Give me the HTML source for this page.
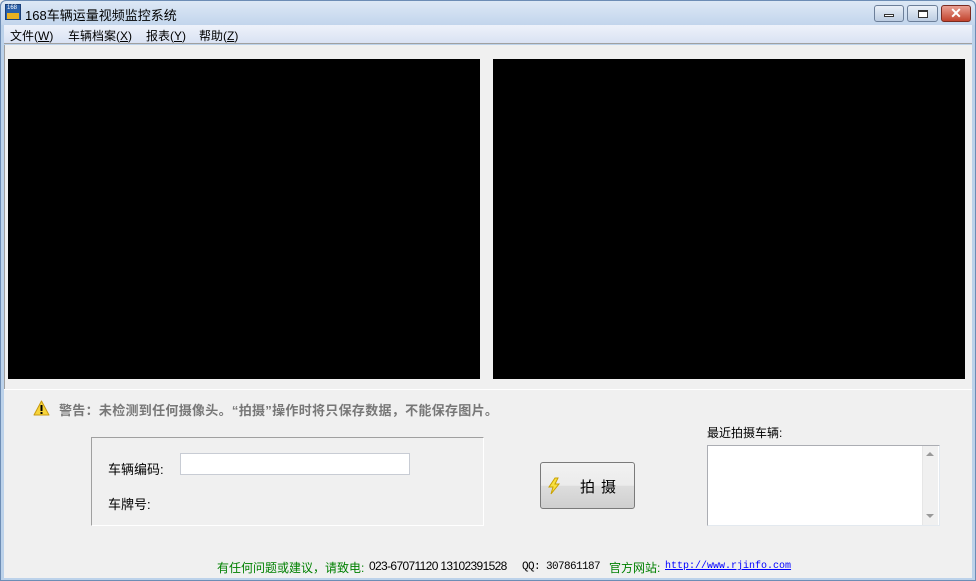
<!DOCTYPE html>
<html><head><meta charset="utf-8"><style>
*{margin:0;padding:0;box-sizing:border-box}
body{width:976px;height:581px;position:relative;overflow:hidden;background:#f0f0f0;font-family:"Liberation Sans","Noto Sans CJK SC",sans-serif;font-size:12px;color:#000}
.a{position:absolute;white-space:nowrap}
</style></head><body>
<div class="a" style="left:0;top:0;width:976px;height:581px;background:#bcd2ea;border:1px solid #6d8db5;border-radius:6px 6px 0 0"></div>
<div class="a" style="left:0;top:0;width:976px;height:25px;background:linear-gradient(#dde8f5,#c2d5ec);border-radius:6px 6px 0 0;border:1px solid #6d8db5;border-bottom:none"></div>
<div class="a" style="left:5px;top:4px;width:16px;height:16px;background:#2a5fa8;border:1px solid #1a3f78"><div class="a" style="left:1px;top:8px;width:12px;height:6px;background:#e8b020"></div><div class="a" style="left:1px;top:0;font-size:6px;color:#fff;line-height:7px">168</div></div>
<div class="a" style="left:25px;top:5px;font-size:13px;color:#000">168车辆运量视频监控系统</div>
<div class="a" style="left:874px;top:5px;width:30px;height:17px;border:1px solid #6c7f99;border-radius:3px;background:linear-gradient(#eaf0f8,#bccde2)"><div class="a" style="left:9px;top:8px;width:10px;height:3px;background:#fff;border:1px solid #333"></div></div>
<div class="a" style="left:907px;top:5px;width:31px;height:17px;border:1px solid #6c7f99;border-radius:3px;background:linear-gradient(#eaf0f8,#bccde2)"><div class="a" style="left:10px;top:4px;width:10px;height:8px;background:#fff;border:1px solid #333;border-top-width:2px"></div></div>
<div class="a" style="left:941px;top:5px;width:30px;height:17px;border:1px solid #7a2b20;border-radius:3px;background:linear-gradient(#e9a093,#c2432d);color:#fff;font-weight:bold;font-size:14px;line-height:14px;text-align:center">✕</div>
<div class="a" style="left:4px;top:25px;width:968px;height:19px;background:linear-gradient(#eef2fa,#d9e2f3);border-bottom:1px solid #a0a0a0"></div>
<div class="a" style="left:10px;top:27px;font-size:12px">文件(<u>W</u>)</div>
<div class="a" style="left:68px;top:27px;font-size:12px">车辆档案(<u>X</u>)</div>
<div class="a" style="left:146px;top:27px;font-size:12px">报表(<u>Y</u>)</div>
<div class="a" style="left:199px;top:27px;font-size:12px">帮助(<u>Z</u>)</div>
<div class="a" style="left:4px;top:45px;width:968px;height:533px;background:#f0f0f0"></div>
<div class="a" style="left:4px;top:45px;width:1px;height:344px;background:#a0a0a0"></div>
<div class="a" style="left:4px;top:389px;width:968px;height:1px;background:#fff"></div>
<div class="a" style="left:8px;top:59px;width:472px;height:320px;background:#000"></div>
<div class="a" style="left:493px;top:59px;width:472px;height:320px;background:#000"></div>
<svg class="a" style="left:33px;top:400px" width="17" height="16"><path d="M8.5 1 L16 15 H1 Z" fill="#f7d43a" stroke="#c89a10" stroke-linejoin="round"/><rect x="7.5" y="5" width="2" height="6" fill="#000"/><rect x="7.5" y="12" width="2" height="2" fill="#000"/></svg>
<div class="a" style="left:59px;top:400px;font-weight:bold;color:#777;font-size:13px;letter-spacing:0.3px">警告：未检测到任何摄像头。“拍摄”操作时将只保存数据，不能保存图片。</div>
<div class="a" style="left:91px;top:437px;width:393px;height:89px;border:1px solid #a0a0a0;border-right-color:#fff;border-bottom-color:#fff"></div>
<div class="a" style="left:108px;top:459px;font-size:13px">车辆编码:</div>
<div class="a" style="left:180px;top:453px;width:230px;height:22px;background:#fff;border:1px solid #c8ccd4"></div>
<div class="a" style="left:108px;top:494px;font-size:13px">车牌号:</div>
<div class="a" style="left:540px;top:462px;width:95px;height:47px;border:1px solid #7a7a7a;border-radius:3px;background:linear-gradient(#f2f2f2 0,#ebebeb 50%,#dddddd 51%,#cfcfcf 100%)"></div>
<svg class="a" style="left:547px;top:477px" width="14" height="18"><path d="M8 1 L2 10 H6 L4 17 L12 7 H8 L11 1 Z" fill="#f8e040" stroke="#c8a000"/></svg>
<div class="a" style="left:580px;top:476px;font-size:15px;letter-spacing:6px">拍摄</div>
<div class="a" style="left:707px;top:424px;font-size:12px">最近拍摄车辆:</div>
<div class="a" style="left:707px;top:445px;width:233px;height:81px;background:#fff;border:1px solid #abadb3;border-right-color:#e3e9ef;border-bottom-color:#e3e9ef"></div>
<div class="a" style="left:922px;top:446px;width:16px;height:79px;background:#f0f0f0;border-left:1px solid #e6e6e6"></div>
<div class="a" style="left:926px;top:452px;width:0;height:0;border:4px solid transparent;border-bottom:4px solid #999;border-top:none"></div>
<div class="a" style="left:926px;top:514px;width:0;height:0;border:4px solid transparent;border-top:4px solid #999;border-bottom:none"></div>
<div class="a" style="left:217px;top:559px;color:#008000">有任何问题或建议，请致电:</div>
<div class="a" style="left:369px;top:559px;letter-spacing:-0.65px">023-67071120 13102391528</div>
<div class="a" style="left:522px;top:561px;font-family:'Liberation Mono',monospace;font-size:11px;letter-spacing:-0.6px">QQ: 307861187</div>
<div class="a" style="left:609px;top:559px;color:#008000">官方网站:</div>
<div class="a" style="left:665px;top:561px;font-family:'Liberation Mono',monospace;font-size:10px;color:#00f;text-decoration:underline">http://www.rjinfo.com</div>
</body></html>
